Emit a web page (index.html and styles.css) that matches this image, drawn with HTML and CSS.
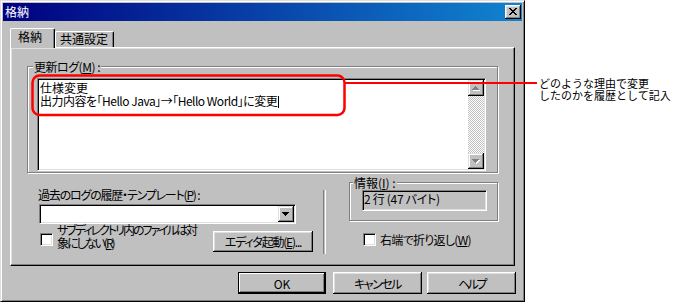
FILE: index.html
```html
<!DOCTYPE html>
<html lang="ja">
<head>
<meta charset="utf-8">
<title>格納</title>
<link rel="stylesheet" href="styles.css">
</head>
<body>
<div class="page">
  <div class="window">
    <div class="titlebar">
      <span class="title">格納</span>
      <span class="close-btn"><svg width="8" height="7" viewBox="0 0 8 7"><path fill="#000" d="M0 0h2v1H0zM6 0h2v1H6zM1 1h2v1H1zM5 1h2v1H5zM2 2h4v1H2zM3 3h2v1H3zM2 4h4v1H2zM1 5h2v1H1zM5 5h2v1H5zM0 6h2v1H0zM6 6h2v1H6z"/></svg></span>
    </div>
    <div class="dlg-body">
      <div class="tabs">
        <div class="tab tab-active">格納</div>
        <div class="tab tab-inactive">共通設定</div>
      </div>
      <div class="panel">
        <div class="group group-log">
          <div class="group-label">更新ログ(<u>M</u>) :</div>
          <div class="memo">
            <div class="memo-text">仕様変更<br><span class="memo-line2">出力内容を「Hello Java」→「Hello World」に変更</span><span class="caret"></span></div>
            <div class="vscroll">
              <div class="sb-btn"><svg width="16" height="16" viewBox="0 0 16 16"><path fill="#fff" d="M8 7h1v1H8zM7 8h3v1H7zM6 9h5v1H6zM5 10h7v1H5z"/><path fill="#808080" d="M7 6h1v1H7zM6 7h3v1H6zM5 8h5v1H5zM4 9h7v1H4z"/></svg></div>
              <div class="sb-track"></div>
              <div class="sb-btn"><svg width="16" height="16" viewBox="0 0 16 16"><path fill="#fff" d="M5 7h7v1H5zM6 8h5v1H6zM7 9h3v1H7zM8 10h1v1H8z"/><path fill="#808080" d="M4 6h7v1H4zM5 7h5v1H5zM6 8h3v1H6zM7 9h1v1H7z"/></svg></div>
            </div>
          </div>
        </div>
        <div class="lower">
          <div class="left-col">
            <div class="field-label">過去のログの履歴・テンプレート(<u>P</u>) :</div>
            <div class="combo">
              <div class="combo-field"></div>
              <div class="combo-btn"><svg width="16" height="16" viewBox="0 0 16 16"><path fill="#000" d="M4 6h7v1H4zM5 7h5v1H5zM6 8h3v1H6zM7 9h1v1H7z"/></svg></div>
            </div>
            <div class="opt-row">
              <div class="check-item check-sub">
                <span class="checkbox"></span>
                <span class="check-label">サブディレクトリ内のファイルは対<br>象にしない(<u>R</u>)</span>
              </div>
              <div class="btn btn-editor">エディタ起動(<u>E</u>)...</div>
            </div>
          </div>
          <div class="vsep"></div>
          <div class="right-col">
            <div class="group group-info">
              <div class="group-label">情報(<u>I</u>) :</div>
              <div class="info-field">2 行 (47 バイト)</div>
            </div>
            <div class="check-item check-wrap">
              <span class="checkbox"></span>
              <span class="check-label">右端で折り返し(<u>W</u>)</span>
            </div>
          </div>
        </div>
      </div>
      <div class="buttons">
        <div class="btn btn-default btn-ok">OK</div>
        <div class="btn btn-cancel">キャンセル</div>
        <div class="btn btn-help">ヘルプ</div>
      </div>
    </div>
  </div>
  <div class="note">どのような理由で変更<br>したのかを履歴として記入</div>
  <svg class="callout" width="700" height="302" viewBox="0 0 700 302">
    <rect x="32.5" y="75.5" width="312" height="39.5" rx="7" ry="7" fill="none" stroke="#ff0000" stroke-width="2.5"/>
    <line x1="344" y1="83" x2="537" y2="83" stroke="#ff0000" stroke-width="2"/>
  </svg>
</div>
</body>
</html>
```

FILE: styles.css
```css
html, body {
  margin: 0;
  padding: 0;
  background: #fff;
}

body {
  font-family: "Noto Sans CJK JP", "Noto Sans", sans-serif;
  font-size: 12px;
  color: #000;
}

u {
  text-decoration: underline;
  text-underline-offset: 1px;
}

.page {
  position: relative;
  display: flex;
  width: 700px;
  height: 302px;
  overflow: hidden;
}

/* ---------- window ---------- */
.window {
  box-sizing: border-box;
  flex: none;
  width: 525px;
  height: 302px;
  background: #c0c0c0;
  border: 1px solid;
  border-color: #dfdfdf #000 #000 #dfdfdf;
  box-shadow: inset 1px 1px #fff, inset -1px -1px #808080;
  padding: 2px;
  display: flex;
  flex-direction: column;
  font-feature-settings: "palt";
}

.titlebar {
  height: 18px;
  flex: none;
  display: flex;
  align-items: center;
  justify-content: space-between;
  padding: 0 1px 0 2px;
  background: linear-gradient(to right, #000080, #1084d0);
  color: #fff;
}

.title {
  line-height: 18px;
  font-size: 12px;
}

.close-btn {
  box-sizing: border-box;
  width: 16px;
  height: 14px;
  display: flex;
  align-items: center;
  justify-content: center;
  padding: 0 1px 1px 0;
  background: #c0c0c0;
  box-shadow: inset -1px -1px #000, inset 1px 1px #fff, inset -2px -2px #808080, inset 2px 2px #dfdfdf;
}

.close-btn svg {
  display: block;
}

.dlg-body {
  flex: 1;
  display: flex;
  flex-direction: column;
  padding: 7px 7px 0 7px;
}

/* ---------- tabs ---------- */
.tabs {
  position: relative;
  z-index: 1;
  display: flex;
  align-items: flex-end;
  height: 20px;
  margin-bottom: -1px;
}

.tab {
  box-sizing: border-box;
  background: #c0c0c0;
  border-left: 1px solid #fff;
  border-top: 1px solid #fff;
  border-right: 1px solid #000;
  border-radius: 2px 2px 0 0;
  box-shadow: inset -1px 0 #808080;
  line-height: 13px;
  white-space: nowrap;
}

.tab-active {
  width: 45px;
  height: 20px;
  padding: 1px 0 0 7px;
}

.tab-inactive {
  width: 59px;
  height: 16px;
  margin-bottom: 1px;
  padding: 0 0 0 4px;
}

/* ---------- panel ---------- */
.panel {
  box-sizing: border-box;
  height: 219px;
  flex: none;
  border: 1px solid;
  border-color: #fff #000 #000 #fff;
  box-shadow: inset -1px -1px #808080, inset 1px 1px #dfdfdf;
  display: flex;
  flex-direction: column;
}

.group {
  box-sizing: border-box;
  border: 1px solid #808080;
  box-shadow: inset 1px 1px #fff, 1px 1px #fff;
  display: flex;
  flex-direction: column;
}

.group-label {
  width: fit-content;
  height: 13px;
  line-height: 13px;
  margin-top: -7px;
  padding: 0 1px;
  background: #c0c0c0;
  white-space: nowrap;
}

.group-log {
  margin: 18px 16px 0 16px;
}

.group-log .group-label {
  margin-left: 5px;
  letter-spacing: -0.5px;
}

/* memo (multi-line edit) */
.memo {
  box-sizing: border-box;
  height: 93px;
  margin: 5px 11px 1px 9px;
  display: flex;
  background: #fff;
  border: 1px solid;
  border-color: #808080 #fff #fff #808080;
  box-shadow: inset 1px 1px #000, inset -1px -1px #dfdfdf;
  padding: 1px;
}

.memo-text {
  flex: 1;
  padding: 1px 1px 0 1px;
  line-height: 13px;
  white-space: nowrap;
}

.memo-line2 {
  letter-spacing: -0.5px;
}

.caret {
  display: inline-block;
  width: 1px;
  height: 12px;
  margin-left: 1px;
  background: #000;
  vertical-align: -2px;
}

.vscroll {
  width: 16px;
  display: flex;
  flex-direction: column;
}

.sb-btn,
.combo-btn {
  box-sizing: border-box;
  width: 16px;
  height: 16px;
  flex: none;
  background: #c0c0c0;
  box-shadow: inset -1px -1px #000, inset 1px 1px #dfdfdf, inset -2px -2px #808080, inset 2px 2px #fff;
}

.sb-btn svg,
.combo-btn svg {
  display: block;
}

.sb-track {
  flex: 1;
  background: repeating-conic-gradient(#fff 0 25%, #c0c0c0 0 50%) 0 0 / 2px 2px;
}

/* ---------- lower section ---------- */
.lower {
  display: flex;
  margin: 0 16px;
}

.left-col {
  width: 275px;
  margin-left: 11px;
  padding-top: 15px;
  display: flex;
  flex-direction: column;
}

.field-label {
  line-height: 13px;
  white-space: nowrap;
  letter-spacing: -1.2px;
}

.combo {
  box-sizing: border-box;
  width: 257px;
  height: 20px;
  margin: 3px 0 0 1px;
  display: flex;
  align-items: center;
  background: #fff;
  border: 1px solid;
  border-color: #808080 #fff #fff #808080;
  box-shadow: inset 1px 1px #000, inset -1px -1px #dfdfdf;
  padding: 1px;
}

.combo-field {
  flex: 1;
}

.opt-row {
  display: flex;
  align-items: flex-start;
  justify-content: space-between;
}

.check-item {
  display: flex;
  white-space: nowrap;
}

.checkbox {
  box-sizing: border-box;
  flex: none;
  width: 13px;
  height: 13px;
  background: #fff;
  border: 1px solid;
  border-color: #808080 #fff #fff #808080;
  box-shadow: inset 1px 1px #000, inset -1px -1px #dfdfdf;
}

.check-label {
  line-height: 13px;
  margin-left: 4px;
}

.check-sub {
  margin-left: 2px;
}

.check-sub .checkbox {
  margin-top: 9px;
}

.check-sub .check-label {
  margin-top: -1px;
  letter-spacing: -2px;
}

.check-wrap .check-label {
  letter-spacing: -0.7px;
}

/* push buttons */
.btn {
  box-sizing: border-box;
  display: flex;
  align-items: center;
  justify-content: center;
  background: #c0c0c0;
  box-shadow: inset -1px -1px #000, inset 1px 1px #fff, inset -2px -2px #808080, inset 2px 2px #dfdfdf;
  line-height: 13px;
  white-space: nowrap;
}

.btn-editor {
  width: 100px;
  height: 21px;
  margin-top: 7px;
  letter-spacing: -1.2px;
}

.vsep {
  width: 1px;
  height: 64px;
  margin: 17px 0 0 10px;
  border-left: 1px solid #808080;
  border-right: 1px solid #fff;
  flex: none;
}

.right-col {
  flex: 1;
  margin-left: 23px;
  padding-top: 9px;
  display: flex;
  flex-direction: column;
}

.group-info .group-label {
  margin-left: 3px;
}

.info-field {
  box-sizing: border-box;
  height: 21px;
  margin: 1px 10px 9px 12px;
  border: 1px solid;
  border-color: #808080 #fff #fff #808080;
  box-shadow: inset 1px 1px #000, inset -1px -1px #dfdfdf;
  padding: 1px 1px 0 1px;
  line-height: 13px;
  white-space: nowrap;
  letter-spacing: -0.3px;
}

.check-wrap {
  margin: 12px 0 0 14px;
  align-items: center;
}

/* dialog buttons */
.buttons {
  display: flex;
  justify-content: flex-end;
  margin: 6px -1px 0 0;
}

.buttons .btn {
  height: 22px;
}

.btn-ok {
  width: 88px;
}

.btn-default {
  border: 1px solid #000;
  box-shadow: inset -1px -1px #000, inset 1px 1px #fff, inset -2px -2px #808080;
}

.btn-cancel {
  width: 89px;
  margin-left: 7px;
  letter-spacing: -1.5px;
}

.btn-help {
  width: 89px;
  margin-left: 5px;
  letter-spacing: -2.5px;
}

/* ---------- annotation ---------- */
.note {
  margin: 77px 0 0 14px;
  font-size: 11px;
  line-height: 12px;
  white-space: nowrap;
  color: #000;
}

.callout {
  position: absolute;
  left: 0;
  top: 0;
  pointer-events: none;
}
```
